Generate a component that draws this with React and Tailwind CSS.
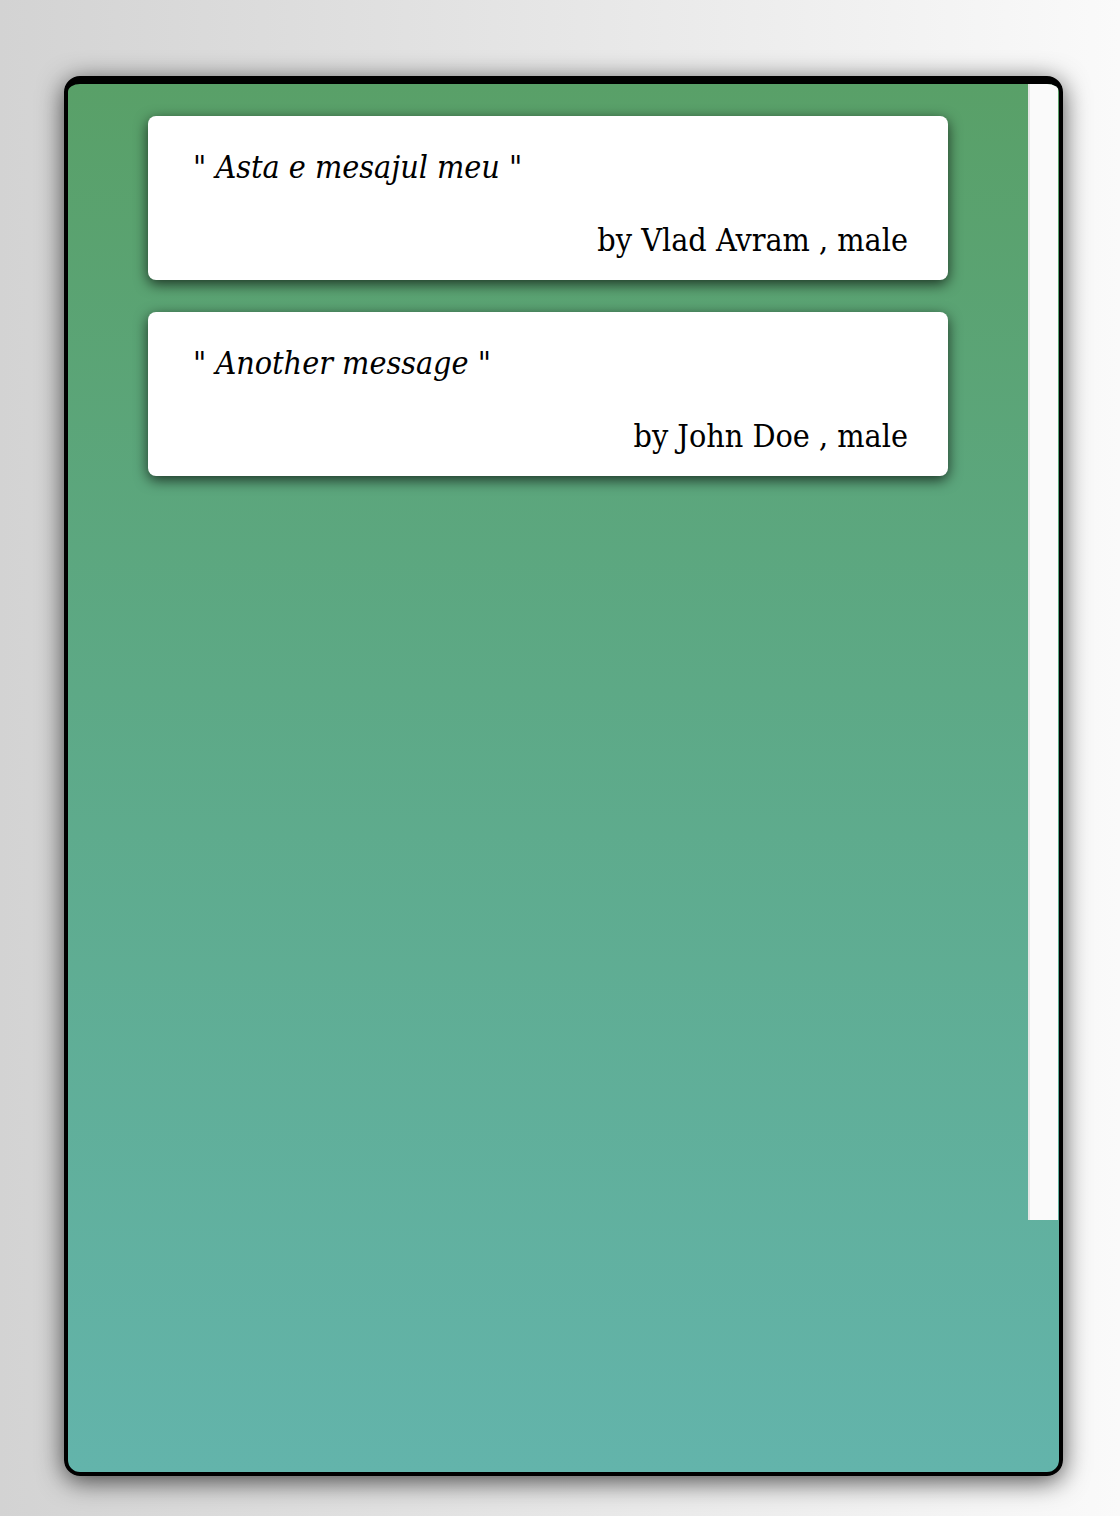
import React from 'react';

const messages = [
  { text: 'Asta e mesajul meu', name: 'Vlad Avram', gender: 'male' },
  { text: 'Another message', name: 'John Doe', gender: 'male' },
];

const MessageCard = ({ msg }) => (
  <div className="w-[800px] mx-auto bg-white rounded-lg shadow-[0_4px_14px_rgba(0,0,0,0.7)] pt-[27px] pb-[16px] px-[40px]">
    <p className="italic text-[32px] leading-[48px] pl-[5px] text-black">
      " {msg.text} "
    </p>
    <p className="text-right text-[32px] leading-[48px] mt-[25px] text-black">
      by {msg.name} , {msg.gender}
    </p>
  </div>
);

export default function App() {
  return (
    <div
      className="min-h-[1516px] bg-gradient-to-r from-[#d3d3d3] to-[#fafafa] pt-[76px] pl-[64px] font-stretch-condensed"
      style={{ fontFamily: '"DejaVu Serif Condensed", "DejaVu Serif", "Liberation Serif", serif' }}
    >
      <div className="w-[999px] h-[1400px] border-[4px] border-t-[8px] border-black rounded-[16px] overflow-hidden shadow-[0_5px_26px_rgba(0,0,0,0.7)] bg-gradient-to-b from-[#59a068] to-[#63b4ab] flex">
        <div className="w-[960px] flex flex-col gap-[32px] pt-[32px]">
          {messages.map((m) => (
            <MessageCard key={m.name} msg={m} />
          ))}
        </div>
        <div className="w-[30px] h-[1136px] bg-[#fafafa] border-l-[2px] border-[#e6e6e6]" />
      </div>
    </div>
  );
}
